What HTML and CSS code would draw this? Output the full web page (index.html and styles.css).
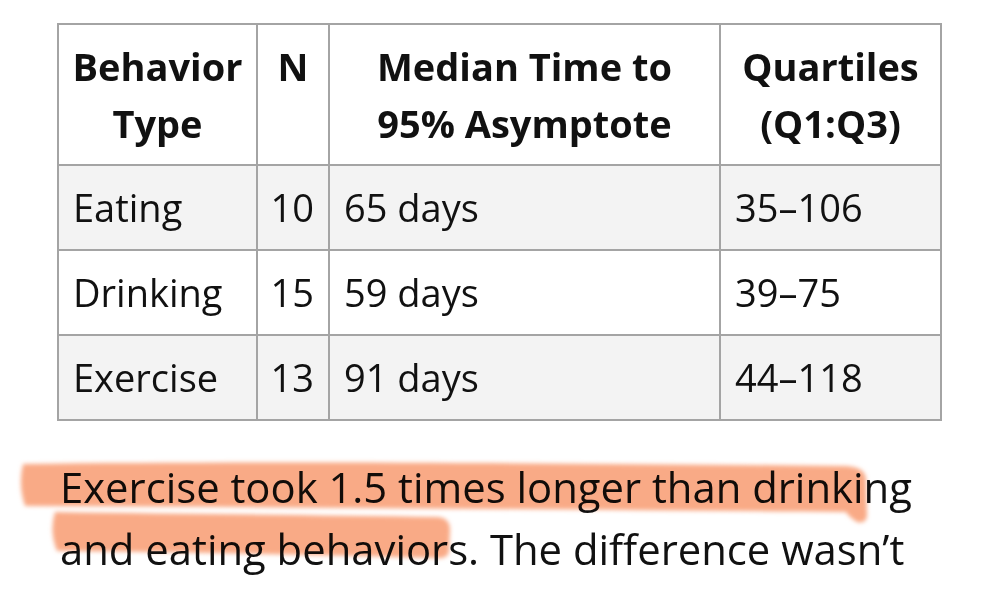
FILE: index.html
```html
<!DOCTYPE html>
<html lang="en">
<head>
<meta charset="utf-8">
<title>Habit formation table</title>
<link rel="stylesheet" href="styles.css">
</head>
<body>
<main class="page">
  <table class="data">
    <colgroup>
      <col class="c1"><col class="c2"><col class="c3"><col class="c4">
    </colgroup>
    <thead>
      <tr>
        <th>Behavior<br>Type</th>
        <th class="top">N</th>
        <th>Median Time to<br>95% Asymptote</th>
        <th>Quartiles<br>(Q1:Q3)</th>
      </tr>
    </thead>
    <tbody>
      <tr class="odd"><td>Eating</td><td class="num">10</td><td>65 days</td><td>35–106</td></tr>
      <tr><td>Drinking</td><td class="num">15</td><td>59 days</td><td>39–75</td></tr>
      <tr class="odd"><td>Exercise</td><td class="num">13</td><td>91 days</td><td>44–118</td></tr>
    </tbody>
  </table>
  <section class="note">
    <svg class="marker" viewBox="0 0 1000 176" width="1000" height="176" aria-hidden="true">
      <defs>
        <filter id="soft" x="-5%" y="-20%" width="110%" height="140%">
          <feGaussianBlur stdDeviation="2"/>
        </filter>
      </defs>
      <g fill="#f9aa86" filter="url(#soft)">
        <path d="M23,43 C250,40 560,42 846,45 Q865,46 866,58 L867,95 Q866,103 857,101 Q849,96 846,91 C600,89 300,86 25,85 Q18,64 23,43 Z"/>
        <path d="M55,91 C180,93 330,94 438,96 Q450,97 450,109 L449,131 Q447,138 437,137 C320,134 180,131 57,130 Q49,110 55,91 Z"/>
      </g>
    </svg>
    <p class="text">Exercise took 1.5 times longer than drinking and eating behaviors. The difference wasn’t</p>
  </section>
</main>
</body>
</html>
```

FILE: styles.css
```css
html, body {
  margin: 0;
  padding: 0;
  background: #ffffff;
}

body {
  font-family: "Open Sans", "Noto Sans", sans-serif;
  color: #111111;
  width: 1000px;
  height: 597px;
  overflow: hidden;
}

.page {
  padding-top: 23px;
}

.data {
  margin-left: 57px;
  border-collapse: collapse;
  table-layout: fixed;
  width: 885px;
  font-size: 38px;
  line-height: 57px;
}

.c1 { width: 199px; }
.c2 { width: 72px; }
.c3 { width: 391px; }
.c4 { width: 221px; }

.data th,
.data td {
  border: 2px solid #a4a4a4;
  padding: 13px 14px;
  white-space: nowrap;
}

.data th {
  font-weight: 700;
  text-align: center;
  vertical-align: top;
  padding: 13px 10px 12px;
}

.data td {
  text-align: left;
  vertical-align: middle;
}

.data td.num {
  text-align: right;
  padding: 13px 14px 13px 8px;
}

.data tr.odd td {
  background: #f3f3f3;
}

.note {
  position: relative;
  padding: 35px 40px 0 60px;
}

.marker {
  position: absolute;
  left: 0;
  top: 0;
  z-index: 0;
}

.text {
  position: relative;
  z-index: 1;
  margin: 0;
  font-size: 41.8px;
  line-height: 62px;
  color: #111111;
  mix-blend-mode: multiply;
}
```
